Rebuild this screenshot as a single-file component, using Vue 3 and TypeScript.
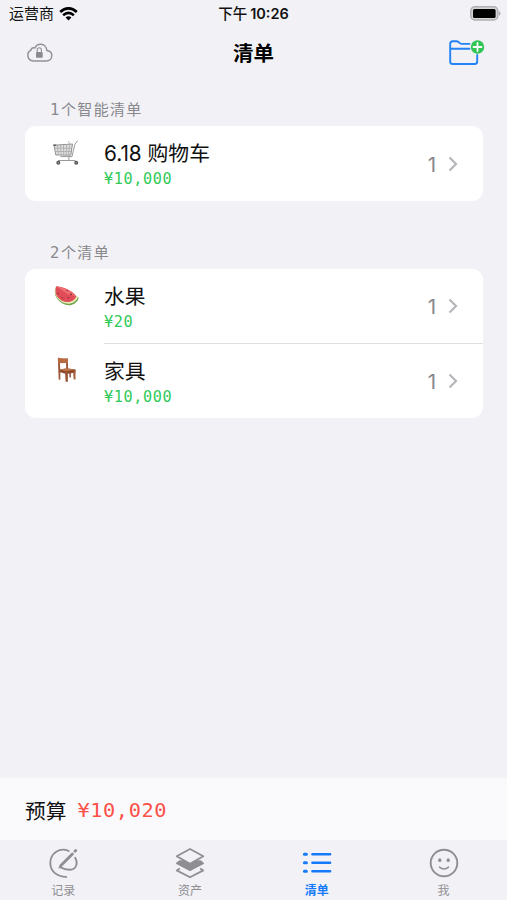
<script setup lang="ts">
interface ListItem { name: string; price: string; count: number; icon: 'cart' | 'melon' | 'chair' }
interface Group { total: number; label: string; items: ListItem[] }

const groups: Group[] = [
  { total: 1, label: '个智能清单', items: [{ name: '6.18 购物车', price: '¥10,000', count: 1, icon: 'cart' }] },
  {
    total: 2,
    label: '个清单',
    items: [
      { name: '水果', price: '¥20', count: 1, icon: 'melon' },
      { name: '家具', price: '¥10,000', count: 1, icon: 'chair' },
    ],
  },
]
const tabs = [
  { id: 'record', label: '记录' },
  { id: 'assets', label: '资产' },
  { id: 'lists', label: '清单' },
  { id: 'me', label: '我' },
]
const active = 'lists'
</script>

<template>
  <div class="screen">
    <div class="status">
      <div class="carrier">
        <span>运营商</span>
        <svg width="19" height="14" viewBox="0 0 19 14" fill="none" stroke="#000">
          <path d="M1.2 5.1Q9.5-2.3 17.8 5.1" stroke-width="2.7" />
          <path d="M4.1 8.3Q9.5 3.5 14.9 8.3" stroke-width="2.5" />
          <path d="M9.5 13.5 6.6 10.5Q9.5 8.1 12.4 10.5Z" fill="#000" stroke="none" />
        </svg>
      </div>
      <div class="clock"><span>下午</span><span>10:26</span></div>
      <svg class="battery" width="31" height="15" viewBox="0 0 31 15">
        <rect x=".8" y=".8" width="27" height="13.2" rx="4" fill="#d5d5d9" stroke="#b0b0b3" stroke-width="1.5" />
        <rect x="3" y="3" width="22.6" height="9" rx="1.6" fill="#000" />
        <path d="M29 5v5q3-2.5 0-5Z" fill="#aaaaad" />
      </svg>
    </div>

    <header class="nav">
      <svg class="cloud" width="27" height="20" viewBox="0 0 27 20">
        <path d="M7.2 18A5.7 5.7 0 0 1 5 7.2C5.1 5.1 7.2 4.1 9 5 10.1 2.5 12.3 1.1 15 1.3c3.2.2 5.7 2.7 5.8 6.2 3 .2 5 2.3 5 5.1 0 3-2.2 5.4-5.3 5.4Z" fill="none" stroke="#929297" stroke-width="1.5" stroke-linejoin="round" />
        <rect x="10" y="9" width="6.7" height="5.8" rx=".8" fill="#8a8a8f" />
        <path d="M11.2 9V7q0-2.3 2.1-2.3T15.4 7v2" fill="none" stroke="#929297" stroke-width="1.1" />
      </svg>
      <h1>清单</h1>
      <svg class="folder" width="38" height="28" viewBox="0 0 38 28" fill="none">
        <path d="M29.2 16v6.6q0 2.4-2.4 2.4H4.8q-2.6 0-2.6-2.6V4.8q0-2.6 2.6-2.6h3.6q1.3 0 2.4 1l1 .9q.9.8 2.2.8H21.5M2.2 9.8H21.5" stroke="#2382f5" stroke-width="1.9" stroke-linecap="round" stroke-linejoin="round" />
        <circle cx="29.5" cy="8" r="6.7" fill="#30c554" />
        <path d="M29.5 4v8M25.5 8h8" stroke="#fff" stroke-width="1.8" stroke-linecap="round" />
      </svg>
    </header>

    <main class="content">
      <section v-for="group in groups" :key="group.label" class="group">
        <h2><span class="total">{{ group.total }}</span>{{ group.label }}</h2>
        <ul class="card">
          <li v-for="item in group.items" :key="item.name" class="row">
            <div class="thumb">
              <svg v-if="item.icon === 'cart'" width="28" height="28" viewBox="0 0 28 28" fill="none">
                <path d="M2 6.2 20.5 5 18.8 16.2 3.8 16Z" fill="#dedede" stroke="#888" stroke-width=".9" />
                <path d="M2.5 9.2h17.3M3 12.5h16.2M5.5 6l.8 10M8.5 6l.5 10M11.5 5.8l.2 10.2M14.5 5.6 14.3 16M17.5 5.4 16.6 16" stroke="#a5a5a5" stroke-width=".7" />
                <path d="M25.8 2q-2 1-3 3.5L20 17.6H8.5M16.8 18l.2 3.2M6 21.5h17.5" stroke="#999" stroke-width="1" />
                <path d="M16.5 2.2 18 5.5" stroke="#bbb" />
                <path d="M1.2 6.2h3" stroke="#666" stroke-width="1.5" />
                <circle cx="6.3" cy="23.8" r="2" fill="#555" /><circle cx="24.2" cy="23.8" r="2" fill="#555" />
                <circle cx="6.3" cy="23.8" r=".7" fill="#aaa" /><circle cx="24.2" cy="23.8" r=".7" fill="#aaa" />
              </svg>
              <svg v-else-if="item.icon === 'melon'" width="28" height="28" viewBox="0 0 28 28">
                <path d="M4 4.6C2.4 8.5 2.2 12.5 4.6 16c3.6 5.2 9.4 8 14.6 6.9 4-.9 6.8-3.6 7.6-7.4Z" fill="#6fa548" />
                <path d="M4 4.6C2.6 8.5 2.6 12.1 4.8 15.3c3.4 4.9 8.8 7.1 13.6 6.2 3.7-.7 6.3-2.8 7.6-6.2Z" fill="#e9eab9" />
                <path d="M4.3 4.2C3.1 7.8 3 11.2 5 14.2c3.1 4.5 7.8 6.4 12.1 5.8 3.3-.5 5.7-2.3 7.1-5.2C22.7 10.3 12.4 4.6 4.3 4.2Z" fill="#e04c57" />
                <path d="M4.6 4.5C12 5 20.5 9.6 23.5 14L16 12.6Z" fill="#ef6c70" />
                <g fill="#682831"><circle cx="6.3" cy="11.6" r=".6" /><circle cx="10.4" cy="15.8" r=".6" /><circle cx="15.2" cy="8.7" r=".6" /><circle cx="19" cy="12.4" r=".8" /><circle cx="16.5" cy="15.8" r=".6" /></g>
              </svg>
              <svg v-else width="28" height="28" viewBox="0 0 28 28">
                <path d="M5.8 1.8h1.7l.9 13.7-.1 8.3H6.7Z" fill="#9b5738" />
                <path d="M14 2.4h1.8l.3 11h-1.9Z" fill="#9a5435" />
                <path d="M6 1.9 15.7 2.5v4.6L6.3 7.3Z" fill="#b86c43" />
                <path d="M7.4 13.8 14.5 12.6 23.6 13.4v3.2l-9.5 1.3-6.5-2Z" fill="#8d4829" />
                <path d="M7.4 13.5 14.5 12.3 23.6 13.4 14 15.2Z" fill="#bd7549" />
                <path d="M13 16h2.9v9.8h-2.3Z" fill="#9a5535" />
                <path d="M21 15.5h2.5v8h-1.8Z" fill="#a76240" />
                <path d="M17.4 16.5h1.4v5h-1.3Z" fill="#824629" />
              </svg>
            </div>
            <div class="detail">
              <div class="info">
                <div class="name">{{ item.name }}</div>
                <div class="price">{{ item.price }}</div>
              </div>
              <span class="count">{{ item.count }}</span>
              <svg class="chevron" width="10" height="16" viewBox="0 0 10 16" fill="none">
                <path d="M1.5 1.5 8 8l-6.5 6.5" stroke="#b7b7bb" stroke-width="2.2" />
              </svg>
            </div>
          </li>
        </ul>
      </section>
    </main>

    <div class="budget"><span class="budget-label">预算</span><span class="budget-amount">¥10,020</span></div>

    <nav class="tabs">
      <div v-for="tab in tabs" :key="tab.id" class="tab" :class="{ active: tab.id === active }">
        <svg v-if="tab.id === 'record'" width="32" height="32" viewBox="0 0 32 32" fill="none" stroke="#8e8e93" stroke-width="1.8" stroke-linecap="round">
          <path d="M21.7 4C13-.1 3.3 6.2 3.3 16c0 8.1 6.2 13.7 16 13.9" />
          <path d="M28.2 10.7c3.2 5.6.9 11.3-4.2 12-3.5.3-7.4-.6-10.3-2.3" />
          <path d="m13.7 18.8 11.7-11.8" stroke-width="2.9" />
          <path d="m28 4.2.7-.7" stroke-width="2.8" />
          <path d="m13 19.5-1 1.4" stroke-width="1.2" />
        </svg>
        <svg v-else-if="tab.id === 'assets'" width="32" height="32" viewBox="0 0 32 32" stroke="#8e8e93" stroke-width="1.8" stroke-linejoin="round">
          <path d="M5.8 21.4 2.7 23.4 16 30.3l13.3-6.9-3.1-2" fill="none" />
          <path d="M2.7 16.4 5.5 14h21l2.8 2.4L16 23.4Z" fill="#8e8e93" stroke-width="1.4" />
          <path d="M2.7 9.2 16 2l13.3 7.2L16 16.8Z" fill="#f2f1f6" />
        </svg>
        <svg v-else-if="tab.id === 'lists'" width="32" height="32" viewBox="0 0 32 32" fill="none" stroke="#157afa" stroke-linecap="round">
          <path d="M3.4 7.2h2M3.4 15.7h2M3.4 24.2h2" stroke-width="3" />
          <path d="M11.4 7.2h17.7M11.4 15.7h17.7M11.4 24.2h17.7" stroke-width="2.5" />
        </svg>
        <svg v-else width="32" height="32" viewBox="0 0 32 32" fill="none" stroke="#8e8e93">
          <circle cx="16" cy="16" r="13.3" stroke-width="1.9" />
          <g fill="#8e8e93" stroke="none"><ellipse cx="11.8" cy="13.2" rx="1.6" ry="1.9" /><ellipse cx="20.2" cy="13.2" rx="1.6" ry="1.9" /></g>
          <path d="M11.5 20.2q4.5 3.6 9 0" stroke-width="1.6" stroke-linecap="round" />
        </svg>
        <span>{{ tab.label }}</span>
      </div>
    </nav>
  </div>
</template>

<style>
body { margin: 0; background: #f2f1f6; }
</style>

<style scoped>
.screen { width: 507px; height: 900px; display: flex; flex-direction: column; overflow: hidden; background: #f2f1f6; color: #111; font-family: Inter, "Noto Sans CJK SC", sans-serif; }
.status { height: 27px; flex: none; display: grid; grid-template-columns: 1fr auto 1fr; align-items: center; padding: 0 6px 0 9px; box-sizing: border-box; }
.carrier { display: flex; align-items: center; gap: 5px; font-size: 15px; line-height: 27px; }
.clock { display: flex; gap: 3px; padding-right: 3px; font-size: 14.5px; font-weight: 600; line-height: 27px; }
.clock span:first-child { font-weight: 500; }
.battery { justify-self: end; }
.nav { height: 53px; flex: none; display: grid; grid-template-columns: 1fr auto 1fr; align-items: start; padding: 0 22px 0 26px; }
.cloud { margin-top: 16px; }
h1 { margin: 12px 0 0; padding-right: 4px; font-size: 20.5px; line-height: 30px; font-weight: 700; color: #000; }
.folder { justify-self: end; margin-top: 12px; margin-right: -1px; }
.content { flex: 1; padding: 18px 24px 0 25px; }
.group { margin-bottom: 40px; }
h2 { margin: 0 0 5px 25px; height: 23px; font-size: 15px; line-height: 23px; letter-spacing: 1.35px; font-weight: 400; color: #88888d; }
.total { font-family: "DejaVu Sans Mono", monospace; font-size: 15.5px; letter-spacing: 1.6px; }
.card { margin: 0; padding: 0; list-style: none; background: #fff; border-radius: 11px; }
.row { display: flex; height: 74.5px; padding-left: 27px; }
.thumb { width: 52px; padding-top: 13px; flex: none; }
.detail { flex: 1; display: flex; align-items: center; padding-right: 25px; }
.row + .row .detail { border-top: 1px solid #dfdfe2; }
.info { flex: 1; padding-top: 4px; }
.name { font-size: 20.8px; line-height: 28px; }
.price { font-family: "DejaVu Sans Mono", monospace; font-size: 15.2px; line-height: 22px; letter-spacing: .6px; color: #31ca59; }
.count { font-size: 20.5px; margin: 2px 12px 0 0; color: #87878b; }
.chevron { margin-top: 1px; }
.budget { height: 62px; flex: none; display: flex; align-items: center; gap: 11px; padding-left: 25px; background: #fafafd; }
.budget-label { font-size: 20.7px; padding-top: 1px; }
.budget-amount { font-family: "DejaVu Sans Mono", monospace; font-size: 20.3px; letter-spacing: .6px; padding-top: 2px; color: #fb5148; }
.tabs { height: 60px; flex: none; display: grid; grid-template-columns: repeat(4, 1fr); }
.tab { display: flex; flex-direction: column; align-items: center; padding-top: 7px; color: #8e8e93; font-size: 12px; line-height: 18px; }
.tab span { margin-top: 3px; }
.tab.active { color: #157afa; font-weight: 700; }
</style>
